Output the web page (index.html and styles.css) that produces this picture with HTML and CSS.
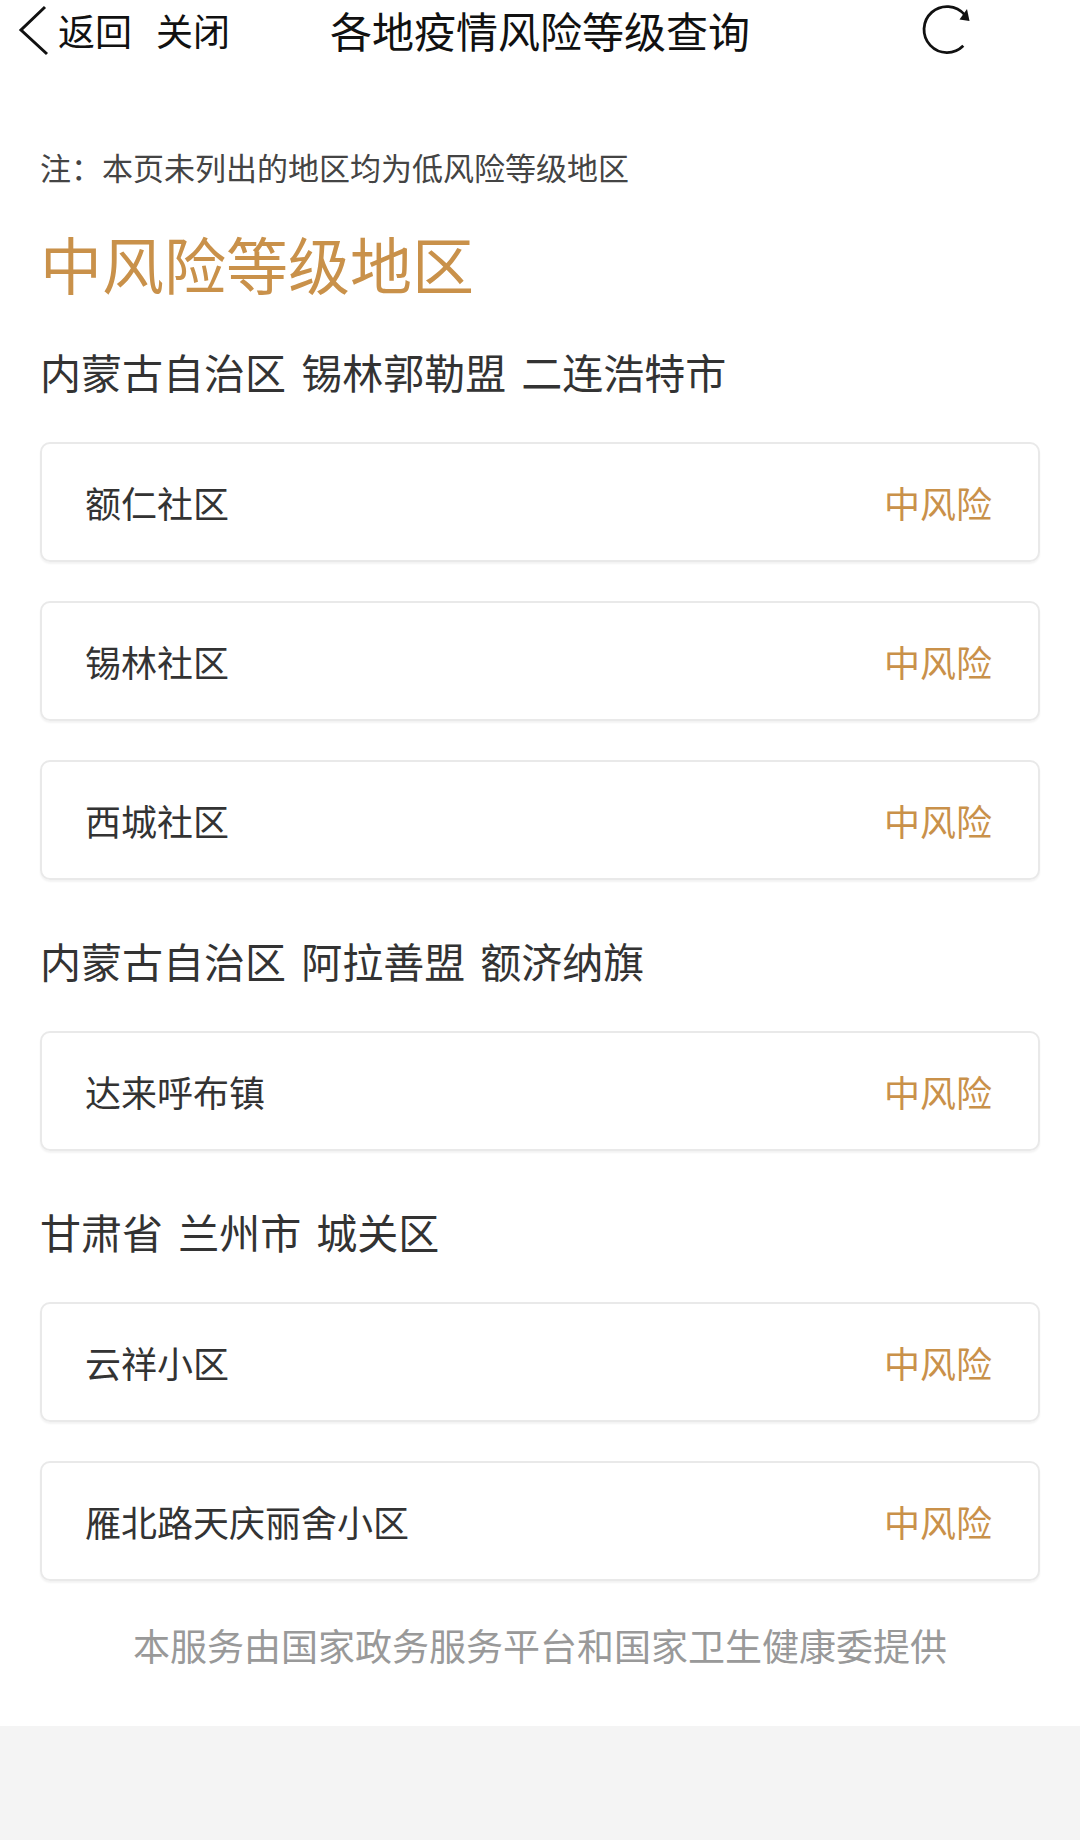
FILE: index.html
```html
<!DOCTYPE html>
<html lang="zh-CN">
  <head>
    <meta charset="utf-8">
    <title>各地疫情风险等级查询</title>
    <link rel="stylesheet" href="styles.css">
  </head>
  <body>
    <div class="page">
      <header class="navbar">
        <div class="nav-left">
          <svg class="back-icon" width="32" height="60" viewBox="0 0 32 60">
            <polyline points="27,7 3,30 29,54" />
          </svg>
          <span class="nav-link">返回</span>
          <span class="nav-link close">关闭</span>
        </div>
        <div class="nav-title">各地疫情风险等级查询</div>
        <div class="nav-right">
          <svg class="refresh-icon" width="60" height="60" viewBox="0 0 60 60">
            <path d="M43.3 45.8 A23 23 0 1 1 44.6 14.7" />
            <polygon points="49.5,21 39.5,19.5 47,9" />
          </svg>
        </div>
      </header>

      <main class="content">
        <p class="note">注：本页未列出的地区均为低风险等级地区</p>
        <h1 class="level-title">中风险等级地区</h1>

        <section class="area">
          <h2 class="area-name">内蒙古自治区 锡林郭勒盟 二连浩特市</h2>
          <ul class="spot-list">
            <li class="spot"><span>额仁社区</span><span class="risk">中风险</span></li>
            <li class="spot"><span>锡林社区</span><span class="risk">中风险</span></li>
            <li class="spot"><span>西城社区</span><span class="risk">中风险</span></li>
          </ul>
        </section>

        <section class="area">
          <h2 class="area-name">内蒙古自治区 阿拉善盟 额济纳旗</h2>
          <ul class="spot-list">
            <li class="spot"><span>达来呼布镇</span><span class="risk">中风险</span></li>
          </ul>
        </section>

        <section class="area">
          <h2 class="area-name">甘肃省 兰州市 城关区</h2>
          <ul class="spot-list">
            <li class="spot"><span>云祥小区</span><span class="risk">中风险</span></li>
            <li class="spot"><span>雁北路天庆丽舍小区</span><span class="risk">中风险</span></li>
          </ul>
        </section>

        <p class="provider">本服务由国家政务服务平台和国家卫生健康委提供</p>
      </main>
    </div>
  </body>
</html>
```

FILE: styles.css
```css
html {
  margin: 0;
  padding: 0;
}
body {
  --text-color: #333;
  --accent: #c9914a;
  --border-color: #e9e9e9;
  margin: 0;
  padding: 0;
  background: #f4f4f4;
  color: var(--text-color);
  font-family: "Noto Sans CJK SC", "Noto Sans", sans-serif;
  min-height: 1840px;
}

.page {
  background: #fff;
}

/* top bar */
.navbar {
  display: grid;
  grid-template-columns: 1fr auto 1fr;
  align-items: center;
  height: 60px;
  color: #111;
}
.nav-left {
  display: flex;
  align-items: center;
  padding-left: 18px;
}
.back-icon {
  fill: none;
  stroke: #111;
  stroke-width: 3;
  stroke-linejoin: miter;
}
.nav-link {
  font-size: 37px;
  line-height: 60px;
  margin-left: 8px;
}
.nav-link.close {
  margin-left: 24px;
}
.nav-title {
  font-size: 42px;
  line-height: 60px;
}
.nav-right {
  display: flex;
  justify-content: flex-end;
  padding-right: 100px;
}
.refresh-icon path {
  fill: none;
  stroke: #111;
  stroke-width: 2.8;
}
.refresh-icon polygon {
  fill: #111;
}

/* list */
.content {
  padding: 85px 40px 53px;
}
.note {
  margin: 0;
  font-size: 31px;
  line-height: 44px;
  color: #444;
}
.level-title {
  margin: 31px 0 0;
  font-size: 62px;
  line-height: 86px;
  font-weight: normal;
  color: var(--accent);
}
.area-name {
  margin: 52px 0 43px;
  font-size: 41px;
  line-height: 56px;
  font-weight: normal;
  color: var(--text-color);
  word-spacing: 6px;
}
.area:first-of-type .area-name {
  margin-top: 37px;
}
.spot-list {
  list-style: none;
  margin: 0;
  padding: 0;
  display: flex;
  flex-direction: column;
  gap: 39px;
}
.spot {
  display: flex;
  justify-content: space-between;
  align-items: center;
  box-sizing: border-box;
  height: 120px;
  padding: 0 46px 0 43px;
  border: 2px solid var(--border-color);
  border-radius: 10px;
  box-shadow: 0 2px 2px rgba(0, 0, 0, 0.05);
  font-size: 36px;
}
.risk {
  color: var(--accent);
}
.provider {
  margin: 36px 0 0;
  text-align: center;
  font-size: 37px;
  line-height: 56px;
  color: #999;
}
```
